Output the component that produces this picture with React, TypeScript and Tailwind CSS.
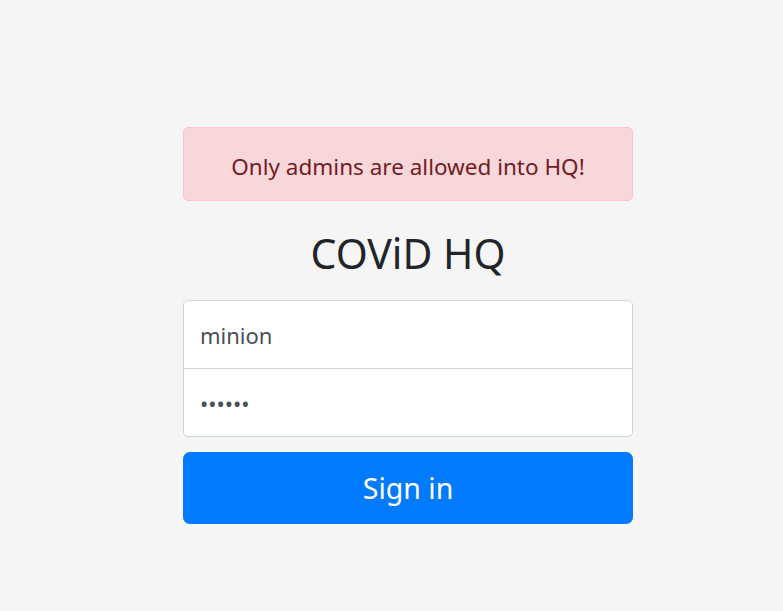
export default function App() {
  return (
    <div
      className="min-h-[611px] w-full bg-[#f5f5f5] pt-[127px] text-[#212529]"
      style={{ fontFamily: '"Noto Sans", "Open Sans", sans-serif' }}
    >
      <form className="ml-[183px] w-[450px]" onSubmit={(e) => e.preventDefault()}>
        {/* Alert */}
        <div className="flex h-[74px] items-center justify-center rounded-[5px] border border-[#f5c6cb] bg-[#f8d7da] pt-[5px] text-[22.5px] text-[#721c24]">
          Only admins are allowed into HQ!
        </div>

        {/* Title */}
        <h3 className="mt-[26px] mb-[21px] text-center text-[41px] leading-[52px] font-normal">
          COViD HQ
        </h3>

        {/* Inputs */}
        <div className="overflow-hidden rounded-[5px] border border-[#ced4da] bg-white">
          <input
            className="block h-[67px] w-full px-[16px] text-[22px] text-[#495057] outline-none"
            defaultValue="minion"
            type="text"
          />
          <input
            className="block h-[68px] w-full border-t border-[#ced4da] px-[16px] text-[22px] text-[#495057] outline-none"
            defaultValue="secret"
            type="password"
          />
        </div>

        {/* Button */}
        <button
          type="submit"
          className="mt-[15px] flex h-[72px] w-full items-center justify-center rounded-[7px] bg-[#007bff] text-[28.5px] text-white"
        >
          Sign in
        </button>
      </form>
    </div>
  );
}
